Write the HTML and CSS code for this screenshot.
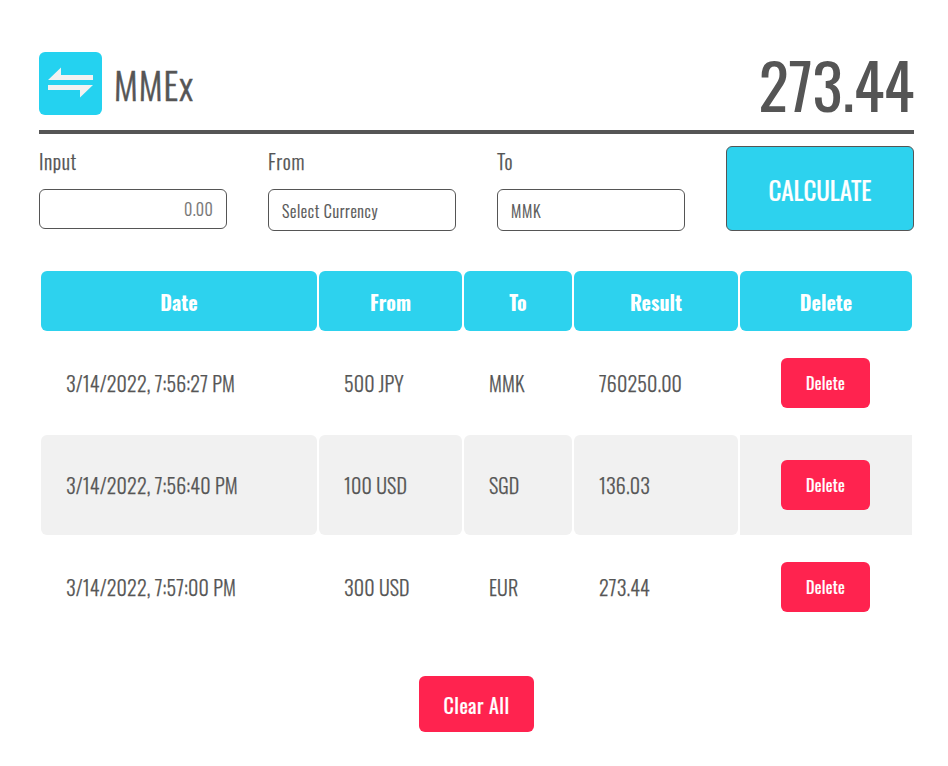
FILE: index.html
```
<!DOCTYPE html>
<html lang="en">
<head>
<meta charset="utf-8">
<title>MMEx</title>
<link rel="stylesheet" href="styles.css">
</head>
<body>
<main class="app">
  <header class="header">
    <div class="brand">
      <svg class="logo" viewBox="0 0 63 63" aria-hidden="true">
        <rect width="63" height="63" rx="6" fill="#24d2f0"/>
        <path d="M9 28 22 15.500V23H54V28ZM9 33H54L41 45.500V38H9Z" fill="#f2f2f2"/>
      </svg>
      <h1 class="title">MMEx</h1>
    </div>
    <output class="total">273.44</output>
  </header>
  <form class="form">
    <div class="field">
      <label class="label" for="amount">Input</label>
      <input class="control amount" id="amount" placeholder="0.00">
    </div>
    <div class="field">
      <label class="label" for="from">From</label>
      <select class="control select" id="from"><option>Select Currency</option></select>
    </div>
    <div class="field">
      <label class="label" for="to">To</label>
      <select class="control select" id="to"><option>MMK</option></select>
    </div>
    <button class="calculate" type="button">CALCULATE</button>
  </form>
  <table class="history">
    <colgroup><col class="col-date"><col class="col-from"><col class="col-to"><col class="col-result"><col class="col-delete"></colgroup>
    <thead>
      <tr><th>Date</th><th>From</th><th>To</th><th>Result</th><th>Delete</th></tr>
    </thead>
    <tbody>
      <tr><td>3/14/2022, 7:56:27 PM</td><td>500 JPY</td><td>MMK</td><td>760250.00</td><td class="action"><button class="danger" type="button">Delete</button></td></tr>
      <tr><td>3/14/2022, 7:56:40 PM</td><td>100 USD</td><td>SGD</td><td>136.03</td><td class="action"><button class="danger" type="button">Delete</button></td></tr>
      <tr><td>3/14/2022, 7:57:00 PM</td><td>300 USD</td><td>EUR</td><td>273.44</td><td class="action"><button class="danger" type="button">Delete</button></td></tr>
    </tbody>
  </table>
  <button class="danger clear" type="button">Clear All</button>
</main>
</body>
</html>
```
FILE: styles.css
```
* {
  box-sizing: border-box;
}

body {
  margin: 0;
  background: #fff;
  color: #555;
  font-family: Oswald, "Open Sans", sans-serif;
  font-size: 20px;
  font-weight: 300;
  -webkit-text-stroke: 0.25px;
}

button,
input,
select {
  font-family: inherit;
  -webkit-text-stroke: 0.2px;
}

.app {
  padding: 38px 34px 0 39px;
}

.header {
  display: flex;
  justify-content: space-between;
  align-items: center;
  height: 96px;
  border-bottom: 4px solid #555;
}

.brand {
  display: flex;
  align-items: center;
  gap: 12px;
}

.logo {
  width: 63px;
  height: 63px;
  margin-top: -2px;
}

.title {
  margin: 0;
  font-size: 37px;
  font-weight: 300;
  letter-spacing: 0.9px;
  -webkit-text-stroke: 0.5px;
}

.total {
  margin-top: -2px;
  font-size: 63px;
  font-weight: 400;
  letter-spacing: -0.3px;
  -webkit-text-stroke: 0;
}

.form {
  display: grid;
  grid-template-columns: repeat(4, 188px);
  column-gap: 41px;
  height: 85px;
  margin-top: 12px;
}

.field {
  display: flex;
  flex-direction: column;
}

.label {
  height: 43px;
  font-size: 20px;
  letter-spacing: 0.6px;
  line-height: 31px;
}

.control {
  width: 100%;
  height: 40px;
  padding: 0 13px;
  border: 1px solid #555;
  border-radius: 6px;
  background: #fff;
  color: #555;
  font-size: 16px;
  font-weight: 300;
}

.amount {
  letter-spacing: 0.3px;
  text-align: right;
}

.select {
  height: 42px;
  padding-top: 2px;
  letter-spacing: 0.65px;
  appearance: none;
}

.calculate {
  padding: 1px 0 0;
  border: 1px solid #555;
  border-radius: 6px;
  background: #2dd2ee;
  color: #fff;
  font-size: 25px;
  font-weight: 400;
}

.history {
  width: 875px;
  margin-top: 38px;
  border-spacing: 2px;
  table-layout: fixed;
}

.col-date { width: 276px; }
.col-from { width: 143px; }
.col-to { width: 108px; }
.col-result { width: 164px; }
.col-delete { width: 172px; }

.history th {
  height: 60px;
  padding: 1px 0 0;
  border-radius: 6px;
  background: #2dd2ee;
  color: #fff;
  font-weight: 700;
  -webkit-text-stroke: 0;
}

.history td {
  height: 100px;
  padding: 0 25px;
  border-radius: 6px;
  letter-spacing: 0.13px;
}

.history td.action {
  padding: 0 26px 0 25px;
  border-radius: 0;
  text-align: center;
}

.history tbody tr:nth-child(even) td {
  background: #f1f1f1;
}

.danger {
  display: inline-block;
  width: 89px;
  height: 50px;
  padding: 0;
  border: 0;
  border-radius: 6px;
  background: #ff234f;
  color: #fff;
  font-size: 16px;
  font-weight: 400;
  letter-spacing: 0.3px;
  vertical-align: middle;
}

.clear {
  display: block;
  width: 115px;
  height: 56px;
  margin: 37px auto 0;
  padding-top: 2px;
  font-size: 20px;
  letter-spacing: 0.5px;
}
```
